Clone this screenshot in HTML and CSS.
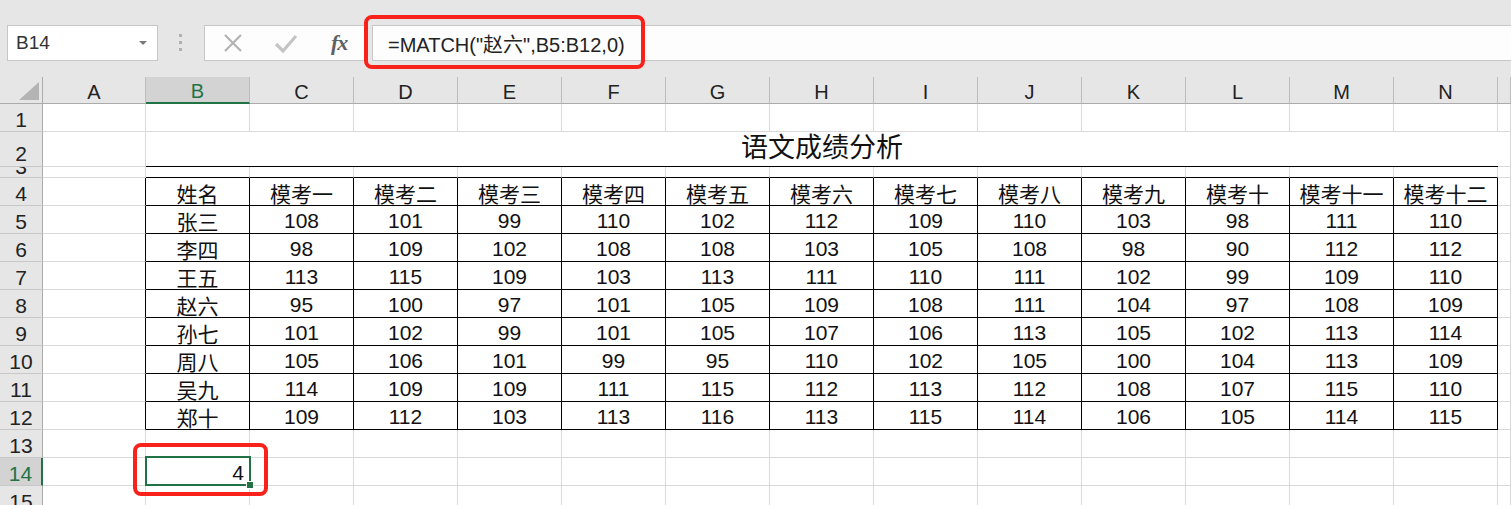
FILE: index.html
```html
<!DOCTYPE html>
<html lang="zh-CN">
<head>
    <meta charset="UTF-8">
    <meta name="viewport" content="width=device-width, initial-scale=1.0">
    <title>语文成绩分析</title>
    <link rel="stylesheet" href="styles.css">
</head>
<body>

    <div class="toolbar">
        <div class="namebox">
            <span>B14</span>
            <span class="caret"></span>
        </div>
        <div class="grip"><i></i><i></i><i></i></div>
        <div class="fx-buttons">
            <svg class="btn-icon" width="22" height="22" viewBox="0 0 22 22">
                <path d="M3 3 L19 19 M19 3 L3 19" stroke="#b3b3b3" stroke-width="2.2" fill="none"/>
            </svg>
            <svg class="btn-icon" width="24" height="22" viewBox="0 0 24 22">
                <path d="M2 12 L9 19 L22 4" stroke="#c4c4c4" stroke-width="3.2" fill="none"/>
            </svg>
            <span class="fx">fx</span>
        </div>
        <div class="formula">=MATCH("赵六",B5:B12,0)</div>
    </div>

    <div class="sheet" id="sheet"></div>

    <div class="mark mark-formula"></div>
    <div class="mark mark-cell"></div>

    <script>
        const cols = ['A', 'B', 'C', 'D', 'E', 'F', 'G', 'H', 'I', 'J', 'K', 'L', 'M', 'N'];
        const heads = ['姓名', '模考一', '模考二', '模考三', '模考四', '模考五', '模考六',
                       '模考七', '模考八', '模考九', '模考十', '模考十一', '模考十二'];
        const rows = [
            ['张三', 108, 101, 99, 110, 102, 112, 109, 110, 103, 98, 111, 110],
            ['李四', 98, 109, 102, 108, 108, 103, 105, 108, 98, 90, 112, 112],
            ['王五', 113, 115, 109, 103, 113, 111, 110, 111, 102, 99, 109, 110],
            ['赵六', 95, 100, 97, 101, 105, 109, 108, 111, 104, 97, 108, 109],
            ['孙七', 101, 102, 99, 101, 105, 107, 106, 113, 105, 102, 113, 114],
            ['周八', 105, 106, 101, 99, 95, 110, 102, 105, 100, 104, 113, 109],
            ['吴九', 114, 109, 109, 111, 115, 112, 113, 112, 108, 107, 115, 110],
            ['郑十', 109, 112, 103, 113, 116, 113, 115, 114, 106, 105, 114, 115]
        ];
        const table = [heads].concat(rows);
        const sheet = document.getElementById('sheet');

        function cell(cls, text) {
            const d = document.createElement('div');
            d.className = 'c ' + cls;
            if (text !== undefined) d.textContent = text;
            sheet.appendChild(d);
            return d;
        }

        // column headers
        cell('corner');
        cols.forEach(c => cell('col-head' + (c === 'B' ? ' active' : ''), c));
        cell('col-head');

        for (let r = 1; r <= 15; r++) {
            let rh = 'row-head';
            if (r === 2) rh += ' bottom';
            if (r === 3) rh += ' tiny';
            if (r === 14) rh += ' active';
            cell(rh, r);

            if (r === 2) {
                cell('');
                cell('title', '语文成绩分析');
                cell('');
                continue;
            }

            cell(r >= 4 && r <= 12 ? 'left-of' : '');

            for (let i = 0; i < 13; i++) {
                if (r === 3) cell('above');
                else if (r >= 4 && r <= 12) cell('tb', table[r - 4][i]);
                else if (r === 14 && i === 0) cell('selected', 4);
                else cell('');
            }
            cell('');
        }
    </script>

</body>
</html>
```

FILE: styles.css
```css
body {
    margin: 0;
    width: 1511px;
    height: 505px;
    overflow: hidden;
    position: relative;
    background: #ffffff;
    font-family: "Liberation Sans", "Noto Sans CJK SC", sans-serif;
    color: #111;
}
.toolbar {
    height: 77px;
    background: #e6e6e6;
    display: flex;
    align-items: flex-start;
    padding: 25px 0 0 7px;
    box-sizing: border-box;
}
.namebox {
    width: 151px;
    height: 36px;
    background: #fff;
    border: 1px solid #c6c6c6;
    box-sizing: border-box;
    display: flex;
    align-items: center;
    justify-content: space-between;
    padding: 0 10px 0 8px;
    font-size: 19px;
    color: #333;
}
.caret {
    width: 0;
    height: 0;
    border-left: 4px solid transparent;
    border-right: 4px solid transparent;
    border-top: 4px solid #7a7a7a;
}
.grip {
    width: 3px;
    margin: 9px 22px 0 21px;
    display: flex;
    flex-direction: column;
    gap: 4px;
}
.grip i {
    display: block;
    width: 3px;
    height: 3px;
    background: #b0b0b0;
}
.fx-buttons {
    width: 164px;
    height: 36px;
    background: #fdfdfd;
    border: 1px solid #c6c6c6;
    box-sizing: border-box;
    display: flex;
    align-items: center;
    padding-left: 17px;
    gap: 30px;
}
.fx {
    font-family: "Liberation Serif", serif;
    font-style: italic;
    font-weight: bold;
    font-size: 22px;
    color: #606060;
    letter-spacing: -1px;
    margin-left: 3px;
}
.formula {
    flex: 1;
    height: 36px;
    margin-left: 4px;
    background: #fdfdfd;
    border: 1px solid #c6c6c6;
    border-right: none;
    box-sizing: border-box;
    display: flex;
    align-items: center;
    padding-left: 15px;
    font-size: 20px;
    color: #222;
}
.sheet {
    display: grid;
    grid-template-columns: 43px 103px repeat(13, 104px) 13px;
    grid-template-rows: 27px 28px 35px 11px repeat(12, 28px);
}
.c {
    box-sizing: border-box;
    border-right: 1px solid #d9d9d9;
    border-bottom: 1px solid #d9d9d9;
    display: flex;
    align-items: center;
    justify-content: center;
    padding-top: 3px;
    font-size: 21px;
    white-space: nowrap;
    overflow: hidden;
}
.corner {
    background: #e6e6e6;
    border-right: 1px solid #ababab;
    border-bottom: 1px solid #ababab;
    justify-content: flex-end;
    align-items: flex-end;
    padding: 0 3px 3px 0;
}
.corner::after {
    content: "";
    width: 20px;
    height: 18px;
    background: #b4b4b4;
    clip-path: polygon(100% 0, 100% 100%, 0 100%);
}
.col-head {
    background: #e6e6e6;
    border-right: 1px solid #bdbdbd;
    border-bottom: 1px solid #ababab;
    font-size: 20px;
    color: #222;
    padding-top: 4px;
}
.col-head.active {
    background: #d3d3d3;
    color: #217346;
    border-bottom: 2px solid #217346;
}
.row-head {
    background: #e6e6e6;
    border-right: 1px solid #ababab;
    border-bottom: 1px solid #c8c8c8;
    font-size: 21px;
    color: #222;
    padding-top: 5px;
}
.row-head.bottom {
    align-items: flex-end;
    padding-top: 0;
}
.row-head.tiny {
    align-items: flex-end;
    padding-top: 0;
    line-height: 21px;
}
.row-head.tiny::first-line {
    line-height: 21px;
}
.row-head.active {
    background: #d3d3d3;
    color: #217346;
    border-right: 2px solid #217346;
}
.title {
    grid-column: span 13;
    font-size: 27px;
    border-right: none;
    border-bottom: 1px solid #000;
    align-items: flex-end;
    padding: 0 0 1px;
}
.above {
    border-bottom: 1px solid #000;
    padding-top: 0;
}
.left-of {
    border-right: 1px solid #000;
}
.tb {
    border-right: 1px solid #000;
    border-bottom: 1px solid #000;
}
.selected {
    position: relative;
    z-index: 1;
    overflow: visible;
    justify-content: flex-end;
    padding-right: 5px;
}
.selected::before {
    content: "";
    position: absolute;
    top: -2px;
    left: -1px;
    right: -2px;
    bottom: -1px;
    border: 2px solid #217346;
}
.selected::after {
    content: "";
    position: absolute;
    right: -5px;
    bottom: -4px;
    width: 6px;
    height: 6px;
    background: #217346;
    border: 1px solid #fff;
}
.mark {
    position: absolute;
    border: 4px solid #f8221a;
    border-radius: 8px;
    box-sizing: border-box;
    z-index: 5;
}
.mark-formula {
    left: 364px;
    top: 15px;
    width: 281px;
    height: 54px;
}
.mark-cell {
    left: 133px;
    top: 443px;
    width: 135px;
    height: 53px;
}
```
